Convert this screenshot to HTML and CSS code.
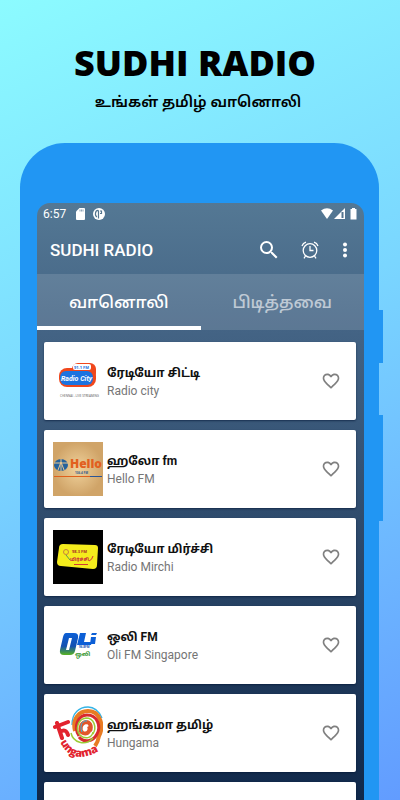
FILE: index.html
```html
<!DOCTYPE html>
<html lang="ta">
<head>
    <meta charset="UTF-8">
    <meta name="viewport" content="width=device-width, initial-scale=1">
    <title>Sudhi Radio</title>
    <link rel="stylesheet" href="styles.css">
</head>
<body>

<svg class="defs" width="0" height="0">
    <symbol id="heart" viewBox="0 0 24 24">
        <path fill="currentColor" d="M16.5 3c-1.74 0-3.41.81-4.5 2.09C10.91 3.81 9.24 3 7.5 3 4.42 3 2 5.42 2 8.5c0 3.78 3.4 6.86 8.55 11.54L12 21.35l1.45-1.32C18.6 15.36 22 12.28 22 8.5 22 5.42 19.58 3 16.5 3zm-4.4 15.55l-.1.1-.1-.1C7.14 14.24 4 11.39 4 8.5 4 6.5 5.5 5 7.5 5c1.54 0 3.04.99 3.57 2.36h1.87C13.46 5.99 14.96 5 16.5 5c2 0 3.5 1.5 3.5 3.5 0 2.89-3.14 5.74-7.9 10.05z"/>
    </symbol>
</svg>

<header class="hero">
    <h1>SUDHI RADIO</h1>
    <p>உங்கள் தமிழ் வானொலி</p>
</header>

<main class="phone">
    <span class="side-key power"></span>
    <span class="side-key volume"></span>
    <div class="screen">
        <div class="status-bar">
            <span>6:57</span>
            <svg class="sd" width="9" height="12" viewBox="0 0 9 12"><path fill="#fff" d="M3.500 0H8a1 1 0 0 1 1 1v10a1 1 0 0 1-1 1H1a1 1 0 0 1-1-1V3.500z"/><path stroke="#60809a" stroke-width=".7" d="M4 1.500v2M5.500 1.500v2M7 1.500v2"/></svg>
            <svg width="12" height="12" viewBox="0 0 12 12"><circle cx="6" cy="6" r="6" fill="#fff"/><path fill="none" stroke="#54758f" stroke-width="1.200" d="M5.500 2.500v8M5.500 2.500C2 2 1.500 8 4 9M7 3h1.500v2.500H7"/></svg>
            <svg class="signal" width="38" height="12" viewBox="0 0 38 12">
                <path fill="#fff" d="M1 2.500Q7-2 13 2.500L7 11z"/>
                <path fill="#fff" d="M25 0v11H14z"/>
                <path fill="#54758f" d="M21.500 4h2v6h-2z"/>
                <path fill="#fff" d="M32 0h3v1h1.500v10.500h-6V1H32z"/>
            </svg>
        </div>
        <div class="toolbar">
            <h2>SUDHI RADIO</h2>
            <button type="button" aria-label="Search">
                <svg width="18" height="18" viewBox="3 3 18 18"><path fill="currentColor" d="M15.500 14h-.79l-.28-.27A6.470 6.470 0 0 0 16 9.500 6.500 6.500 0 1 0 9.500 16c1.610 0 3.090-.59 4.230-1.570l.27.28v.79l5 4.990L20.490 19l-4.990-5zm-6 0C7.010 14 5 11.990 5 9.500S7.010 5 9.500 5 14 7.010 14 9.500 11.990 14 9.500 14z"/></svg>
            </button>
            <button type="button" aria-label="Sleep timer">
                <svg width="18" height="18" viewBox="0 0 18 18" fill="none" stroke="currentColor" stroke-width="1.300"><circle cx="9" cy="9.500" r="6.800"/><path d="M9 5v4.500h3.500M1 5Q2 2 5 1.200M17 5Q16 2 13 1.200M4.500 15 3 17.300M13.500 15l1.500 2.300"/></svg>
            </button>
            <button type="button" class="more" aria-label="More options">
                <svg width="6" height="16" viewBox="0 0 6 16" fill="currentColor"><circle cx="3" cy="2.500" r="2"/><circle cx="3" cy="8" r="2"/><circle cx="3" cy="13.500" r="2"/></svg>
            </button>
        </div>
        <div class="tabs">
            <button type="button" class="tab active">வானொலி</button>
            <button type="button" class="tab">பிடித்தவை</button>
        </div>
        <ul class="stations">
            <li class="station">
                <svg class="logo" viewBox="0 0 50 54">
                    <rect x="19" y="9" width="24" height="16" rx="6" fill="#f0471c"/>
                    <rect x="6" y="14" width="37" height="19" rx="8" fill="#f0471c"/>
                    <rect x="20" y="10" width="18" height="6" rx="2" fill="#fff"/>
                    <text x="21" y="15" class="t-city-top">91.1 FM</text>
                    <rect x="7" y="17" width="33" height="14" rx="6" fill="#1c73e0"/>
                    <text x="8" y="27" class="t-city">Radio City</text>
                    <text x="7" y="43" class="t-tiny">CHENNAI - LIVE STREAMING</text>
                </svg>
                <div class="names"><h3>ரேடியோ சிட்டி</h3><p>Radio city</p></div>
                <button type="button" class="fav" aria-label="Favourite"><svg width="20" height="20"><use href="#heart"/></svg></button>
            </li>
            <li class="station">
                <svg class="logo" viewBox="0 0 50 54">
                    <defs><radialGradient id="paper"><stop offset="0" stop-color="#f0d29c"/><stop offset="1" stop-color="#d0a468"/></radialGradient></defs>
                    <rect width="50" height="54" fill="url(#paper)"/>
                    <ellipse cx="8" cy="23" rx="7" ry="6" fill="#25629c"/>
                    <path stroke="#e9c893" fill="none" d="M1 21h14M8 17v12M5 28l3-8 3 8"/>
                    <text x="17" y="26" class="t-hello">Hello</text>
                    <text x="22" y="32" class="t-freq">106.4 FM</text>
                    <path stroke="#e0601c" d="M1 34.500h36"/><path stroke="#2a5596" d="M37 34.500h12"/>
                </svg>
                <div class="names"><h3>ஹலோ fm</h3><p>Hello FM</p></div>
                <button type="button" class="fav" aria-label="Favourite"><svg width="20" height="20"><use href="#heart"/></svg></button>
            </li>
            <li class="station">
                <svg class="logo" viewBox="0 0 50 54">
                    <rect width="50" height="54" fill="#000"/>
                    <path fill="#f4ec1c" d="M10 14 42 15q3 0 3 3l-1 17q0 4-4 4L8 36q-4 0-4-4L6 18q0-4 4-4z"/>
                    <circle cx="13" cy="22" r="2.500" fill="none" stroke="#c88040"/>
                    <path stroke="#5a9a50" d="M13 25l4 5"/>
                    <text x="19" y="23" class="t-983">98.3 FM</text>
                    <text x="17" y="31" class="t-mirchi">மிர்ச்சி</text>
                    <path stroke="#d23a34" fill="none" d="M21 34.500h14M36 31q3-1 4-5"/>
                </svg>
                <div class="names"><h3>ரேடியோ மிர்ச்சி</h3><p>Radio Mirchi</p></div>
                <button type="button" class="fav" aria-label="Favourite"><svg width="20" height="20"><use href="#heart"/></svg></button>
            </li>
            <li class="station">
                <svg class="logo" viewBox="0 0 50 54">
                    <defs><linearGradient id="oli" x2="0" y2="1"><stop offset="0" stop-color="#0c5fd6"/><stop offset=".6" stop-color="#1350b0"/><stop offset="1" stop-color="#58b420"/></linearGradient></defs>
                    <path fill="url(#oli)" fill-rule="evenodd" d="M13 15h8q5 0 4 5l-3 13q-1 4-5 4h-6q-5 0-4-5l3-13q1-4 3-4zm3 5-3 12h3l3-12z"/>
                    <path fill="#0c5fd6" d="M27 15h6l-2 9h8l-1 3H24zM38 19h5l-1 7h-5zM39 15h5l-1 2h-5z"/>
                    <text x="26" y="30" class="t-968">96.8FM</text>
                    <text x="22" y="38" class="t-oli">ஒலி</text>
                </svg>
                <div class="names"><h3>ஒலி FM</h3><p>Oli FM Singapore</p></div>
                <button type="button" class="fav" aria-label="Favourite"><svg width="20" height="20"><use href="#heart"/></svg></button>
            </li>
            <li class="station">
                <svg class="logo" viewBox="0 0 50 54" fill="none">
                    <path stroke="#35b4e6" stroke-width="1.300" d="M19 19C19 7 26 1 35 1q9 0 14 11"/>
                    <path stroke="#e87b22" stroke-width="4" d="M22 25C19 13 26 5 35 5c13 0 16 16 11 25q-1 6-4 10"/>
                    <path stroke="#d92a2e" stroke-width="3" d="M26 30C20 21 25 9 34 9c11 0 14 12 10 19-4 8-13 9-18 3"/>
                    <path stroke="#9ccc35" stroke-width="1.500" d="M18 27c2 9 14 14 22 5M40 28c4-7 1-16-7-16-8 1-11 11-6 17 5 5 12 3 13-3"/>
                    <path stroke="#e2572a" stroke-width="4" d="M37 25c2-5 0-9-4-9-6 1-7 9-3 11 5 2 8-3 6-7"/>
                    <path stroke="#35b4e6" stroke-width="1" d="M29 26c-3-7 1-12 5-11"/>
                    <path stroke="#e2232e" stroke-width="4" stroke-linecap="round" d="M2 21 15 16M4 17l5 15M7 26q6-4 8 3"/>
                    <defs><path id="arc" d="M7 36Q19 61 48 44"/></defs>
                    <text class="t-hungama"><textPath href="#arc">ungama</textPath></text>
                </svg>
                <div class="names"><h3>ஹங்கமா தமிழ்</h3><p>Hungama</p></div>
                <button type="button" class="fav" aria-label="Favourite"><svg width="20" height="20"><use href="#heart"/></svg></button>
            </li>
            <li class="station"></li>
        </ul>
    </div>
</main>

</body>
</html>
```
FILE: styles.css
```css
* {
    box-sizing: border-box;
}
body {
    margin: 0;
    height: 100vh;
    overflow: hidden;
    display: flex;
    flex-direction: column;
    font-family: Roboto, "Noto Sans Tamil", "Noto Sans", sans-serif;
    background: linear-gradient(155deg, #8cfbff, #7ad6ff 45%, #629cff);
}
h1, h2, h3, p, ul {
    margin: 0;
    padding: 0;
}
button {
    border: 0;
    padding: 0;
    background: none;
    color: #fff;
    font-family: inherit;
}
button svg {
    display: block;
}
.defs {
    position: absolute;
}

/* heading above the phone */
.hero {
    height: 143px;
    flex: none;
    padding: 38px 10px 0 0;
    text-align: center;
    color: #000;
}
.hero h1 {
    font: 800 36px/50px "Open Sans", sans-serif;
}
.hero p {
    font-size: 15px;
    font-weight: 600;
    line-height: 28px;
    padding-left: 6px;
}

/* phone body */
.phone {
    position: relative;
    flex: 1;
    min-height: 0;
    margin: 0 21px 0 20px;
    padding: 60px 15px 0 17px;
    border-radius: 45px 45px 0 0;
    background: #2196f3;
}
.side-key {
    position: absolute;
    right: -4px;
    width: 4px;
    background: #2196f3;
}
.power {
    top: 167px;
    height: 53px;
}
.volume {
    top: 272px;
    height: 106px;
}
.screen {
    height: 100%;
    overflow: hidden;
    border-radius: 13px 13px 0 0;
    background: linear-gradient(#547894, #436384 22%, #10284a);
}
.status-bar {
    display: flex;
    align-items: center;
    height: 22px;
    padding: 0 6px;
    color: #fff;
    font-size: 12px;
}
.status-bar .sd {
    margin: 0 8px 0 10px;
}
.status-bar .signal {
    margin-left: auto;
}
.toolbar {
    display: flex;
    align-items: center;
    height: 49px;
    padding: 0 16px 0 13px;
    color: #fff;
}
.toolbar h2 {
    flex: 1;
    font-size: 17px;
    font-weight: 500;
}
.toolbar button {
    margin-right: 23px;
}
.toolbar .more {
    margin-right: 0;
}

.tabs {
    display: flex;
    height: 56px;
    background: rgba(255, 255, 255, 0.13);
}
.tab {
    flex: 1;
    padding-top: 6px;
    font-size: 17px;
    font-weight: 500;
    border-bottom: 4px solid transparent;
    opacity: 0.6;
}
.tab.active {
    opacity: 1;
    border-bottom-color: #fff;
}

/* station list */
.stations {
    display: flex;
    flex-direction: column;
    gap: 10px;
    padding: 12px 8px 0 7px;
    list-style: none;
}
.station {
    display: flex;
    align-items: center;
    height: 78px;
    padding: 0 15px 0 9px;
    border-radius: 2px;
    background: #fff;
    box-shadow: 0 1px 2px rgba(0, 20, 50, 0.6);
}
.logo {
    flex: none;
    width: 50px;
    height: 54px;
}
.names {
    flex: 1;
    padding: 0 0 0 4px;
}
.names h3 {
    color: #111;
    font-size: 12px;
    font-weight: 700;
    line-height: 20px;
}
.names p {
    color: #757575;
    font-size: 12px;
    line-height: 16px;
}
.fav {
    color: #808080;
}

/* lettering inside the station logos */
.logo text {
    font-family: "Open Sans", "Noto Sans Tamil", sans-serif;
    font-weight: 700;
}
.logo .t-city-top {
    font-size: 4px;
    fill: #1c73e0;
}
.logo .t-city {
    font-family: Roboto, sans-serif;
    font-size: 7px;
    font-style: italic;
    fill: #fff;
}
.logo .t-tiny {
    font-size: 3px;
    font-weight: 400;
    fill: #555;
}
.logo .t-hello {
    font-size: 12px;
    font-weight: 800;
    fill: #e2601f;
}
.logo .t-freq {
    font-size: 3px;
    fill: #33598e;
}
.logo .t-983 {
    font-size: 4px;
    fill: #a83228;
}
.logo .t-mirchi {
    font-size: 5px;
    fill: #c8283c;
}
.logo .t-968 {
    font-size: 3px;
    fill: #1350b0;
}
.logo .t-oli {
    font-size: 6px;
    fill: #35952c;
}
.logo .t-hungama {
    font-size: 11px;
    font-weight: 800;
    fill: #e2232e;
}
```
